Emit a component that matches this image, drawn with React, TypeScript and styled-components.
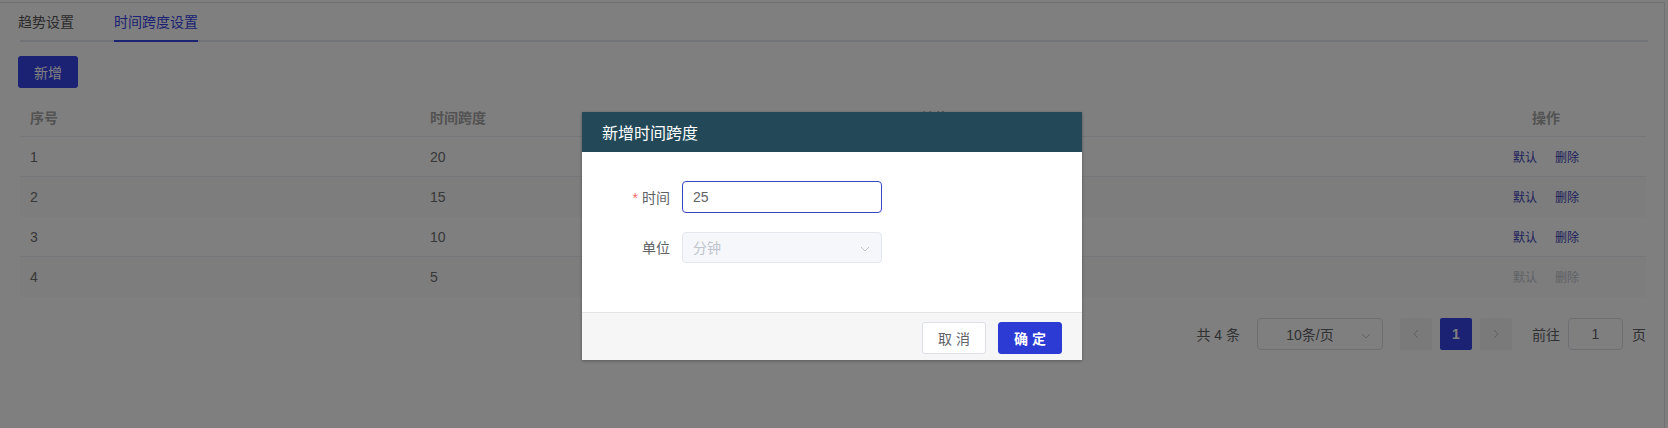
import React from "react";
import styled, { createGlobalStyle } from "styled-components";

const Global = createGlobalStyle`
  html, body { margin: 0; padding: 0; background: #fff; }
  body {
    font-family: "Liberation Sans", "Noto Sans CJK SC", sans-serif;
    font-size: 14px;
    color: #606266;
  }
  * { box-sizing: border-box; }
`;

const PRIMARY = "#3844e6";

const Page = styled.div`
  position: relative;
  width: 1668px;
  height: 428px;
  overflow: hidden;
`;

const Frame = styled.div`
  margin-top: 2px;
  width: 1665px;
  height: 426px;
  border-top: 1px solid #e2e2e2;
  border-right: 1px solid #e2e2e2;
  padding: 0 16px 0 18px;
`;

const TabBar = styled.div`
  display: flex;
  gap: 40px;
  height: 39px;
  margin-left: 2px;
  border-bottom: 2px solid #e4e7ed;
`;

const Tab = styled.div<{ $active?: boolean }>`
  position: relative;
  line-height: 38px;
  font-size: 14px;
  margin-left: ${(p) => (p.$active ? "0" : "-2px")};
  color: ${(p) => (p.$active ? PRIMARY : "#555")};
  &::after {
    content: "";
    display: ${(p) => (p.$active ? "block" : "none")};
    position: absolute;
    left: 0;
    right: 0;
    bottom: -2px;
    height: 2px;
    background: ${PRIMARY};
  }
`;

const Toolbar = styled.div`
  padding: 14px 0 9px;
  display: flex;
`;

const PrimaryButton = styled.button`
  width: 60px;
  height: 32px;
  border: none;
  border-radius: 3px;
  background: ${PRIMARY};
  color: #fff;
  font-family: inherit;
  font-size: 14px;
  padding: 0;
`;

const Table = styled.div`
  margin-left: 2px;
  width: 1626px;
`;

const Row = styled.div<{ $head?: boolean; $stripe?: boolean }>`
  display: grid;
  grid-template-columns: 400px 490px 536px 200px;
  height: 40px;
  align-items: center;
  border-bottom: 1px solid ${(p) => (p.$stripe ? "#fafafa" : "#ebeef5")};
  background: ${(p) => (p.$stripe ? "#fafafa" : "#fff")};
  color: ${(p) => (p.$head ? "#a6a6a6" : "#707070")};
  font-weight: ${(p) => (p.$head ? 600 : 400)};
  font-size: 14px;
`;

const Cell = styled.div<{ $center?: boolean }>`
  padding: 0 10px;
  display: flex;
  justify-content: ${(p) => (p.$center ? "center" : "flex-start")};
  gap: 18px;
`;

const LinkBtn = styled.span<{ $disabled?: boolean }>`
  font-size: 12px;
  color: ${(p) => (p.$disabled ? "#c0c4cc" : "#3b44b8")};
`;

const Pager = styled.div`
  display: flex;
  justify-content: flex-end;
  align-items: center;
  width: 1628px;
  margin-top: 21px;
  height: 32px;
  font-size: 14px;
  color: #606266;
`;

const PagerText = styled.span<{ $mr: number }>`
  margin-right: ${(p) => p.$mr}px;
  white-space: pre;
`;

const SizeSelect = styled.div`
  position: relative;
  width: 126px;
  height: 32px;
  border: 1px solid #dcdfe6;
  border-radius: 4px;
  margin-right: 17px;
  display: flex;
  align-items: center;
  justify-content: center;
  padding-right: 20px;
  color: #606266;
  font-size: 14px;
  svg { position: absolute; right: 10px; top: 11px; }
`;

const PageBtn = styled.div<{ $active?: boolean; $mr: number }>`
  width: 32px;
  height: 32px;
  border-radius: 2px;
  margin-right: ${(p) => p.$mr}px;
  background: ${(p) => (p.$active ? PRIMARY : "#f4f4f5")};
  color: ${(p) => (p.$active ? "#fff" : "#c0c4cc")};
  font-weight: 700;
  font-size: 14px;
  display: flex;
  align-items: center;
  justify-content: center;
`;

const JumpInput = styled.div`
  width: 55px;
  height: 32px;
  border: 1px solid #dcdfe6;
  border-radius: 4px;
  margin-right: 9px;
  display: flex;
  align-items: center;
  justify-content: center;
  color: #606266;
`;

const Overlay = styled.div`
  position: absolute;
  inset: 0;
  background: rgba(0, 0, 0, 0.5);
`;

const Dialog = styled.div`
  position: absolute;
  left: 582px;
  top: 112px;
  width: 500px;
  background: #fff;
  box-shadow: 0 1px 3px rgba(0, 0, 0, 0.3);
  display: flex;
  flex-direction: column;
`;

const DialogHeader = styled.div`
  height: 40px;
  background: #234959;
  color: #fff;
  font-size: 16px;
  display: flex;
  align-items: center;
  padding-left: 20px;
`;

const DialogBody = styled.div`
  padding: 29px 20px 49px;
  display: flex;
  flex-direction: column;
  gap: 18px;
`;

const FormItem = styled.div`
  display: flex;
  align-items: center;
  height: 32px;
`;

const Label = styled.label`
  width: 80px;
  padding-right: 12px;
  text-align: right;
  font-size: 14px;
  color: #606266;
`;

const Star = styled.span`
  color: #f56c6c;
  margin-right: 4px;
`;

const Field = styled.div<{ $focused?: boolean; $disabled?: boolean }>`
  position: relative;
  width: 200px;
  height: ${(p) => (p.$focused ? 32 : 31)}px;
  border: 1px solid ${(p) => (p.$focused ? "#3a44c2" : "#e4e7ed")};
  border-radius: 4px;
  background: ${(p) => (p.$disabled ? "#f5f7fa" : "#fff")};
  color: ${(p) => (p.$disabled ? "#c0c4cc" : "#606266")};
  display: flex;
  align-items: center;
  padding-left: 10px;
  font-size: 14px;
  svg { position: absolute; right: 10px; top: 10px; }
`;

const DialogFooter = styled.div`
  height: 48px;
  background: #f6f6f6;
  border-top: 1px solid #e4e4e4;
  display: flex;
  justify-content: flex-end;
  align-items: center;
  gap: 12px;
  padding: 2px 20px 0 0;
`;

const FooterButton = styled.button<{ $primary?: boolean }>`
  width: 64px;
  height: 32px;
  border-radius: 3px;
  border: 1px solid ${(p) => (p.$primary ? "#2b3bd4" : "#dcdfe6")};
  background: ${(p) => (p.$primary ? "#2b3bd4" : "#fff")};
  color: ${(p) => (p.$primary ? "#fff" : "#606266")};
  font-weight: ${(p) => (p.$primary ? 700 : 400)};
  font-family: inherit;
  font-size: 14px;
  letter-spacing: 4px;
  padding: 0 0 0 4px;
`;

const Chevron = ({ dir = "down", color = "#c0c4cc", size = 12 }: { dir?: "down" | "left" | "right"; color?: string; size?: number }) => {
  const pts =
    dir === "down" ? "2,4 6,8 10,4" : dir === "left" ? "8,2 4,6 8,10" : "4,2 8,6 4,10";
  return (
    <svg width={size} height={size} viewBox="0 0 12 12">
      <polyline points={pts} fill="none" stroke={color} strokeWidth="1" />
    </svg>
  );
};

const rows = [
  { id: 1, span: 20, unit: "分钟", disabled: false },
  { id: 2, span: 15, unit: "分钟", disabled: false },
  { id: 3, span: 10, unit: "分钟", disabled: false },
  { id: 4, span: 5, unit: "分钟", disabled: true },
];

export default function App() {
  return (
    <Page>
      <Global />
      <Frame>
        <TabBar>
          <Tab>趋势设置</Tab>
          <Tab $active>时间跨度设置</Tab>
        </TabBar>
        <Toolbar>
          <PrimaryButton>新增</PrimaryButton>
        </Toolbar>
        <Table>
          <Row $head>
            <Cell>序号</Cell>
            <Cell>时间跨度</Cell>
            <Cell>单位</Cell>
            <Cell $center>操作</Cell>
          </Row>
          {rows.map((r, i) => (
            <Row key={r.id} $stripe={i % 2 === 1}>
              <Cell>{r.id}</Cell>
              <Cell>{r.span}</Cell>
              <Cell>{r.unit}</Cell>
              <Cell $center>
                <LinkBtn $disabled={r.disabled}>默认</LinkBtn>
                <LinkBtn $disabled={r.disabled}>删除</LinkBtn>
              </Cell>
            </Row>
          ))}
        </Table>
        <Pager>
          <PagerText $mr={17}>共 4 条</PagerText>
          <SizeSelect>
            10条/页
            <Chevron />
          </SizeSelect>
          <PageBtn $mr={8}>
            <Chevron dir="left" />
          </PageBtn>
          <PageBtn $active $mr={8}>1</PageBtn>
          <PageBtn $mr={20}>
            <Chevron dir="right" />
          </PageBtn>
          <PagerText $mr={8}>前往</PagerText>
          <JumpInput>1</JumpInput>
          <PagerText $mr={0}>页</PagerText>
        </Pager>
      </Frame>
      <Overlay />
      <Dialog>
        <DialogHeader>新增时间跨度</DialogHeader>
        <DialogBody>
          <FormItem>
            <Label>
              <Star>*</Star>时间
            </Label>
            <Field $focused>25</Field>
          </FormItem>
          <FormItem>
            <Label>单位</Label>
            <Field $disabled>
              分钟
              <Chevron />
            </Field>
          </FormItem>
        </DialogBody>
        <DialogFooter>
          <FooterButton>取消</FooterButton>
          <FooterButton $primary>确定</FooterButton>
        </DialogFooter>
      </Dialog>
    </Page>
  );
}
